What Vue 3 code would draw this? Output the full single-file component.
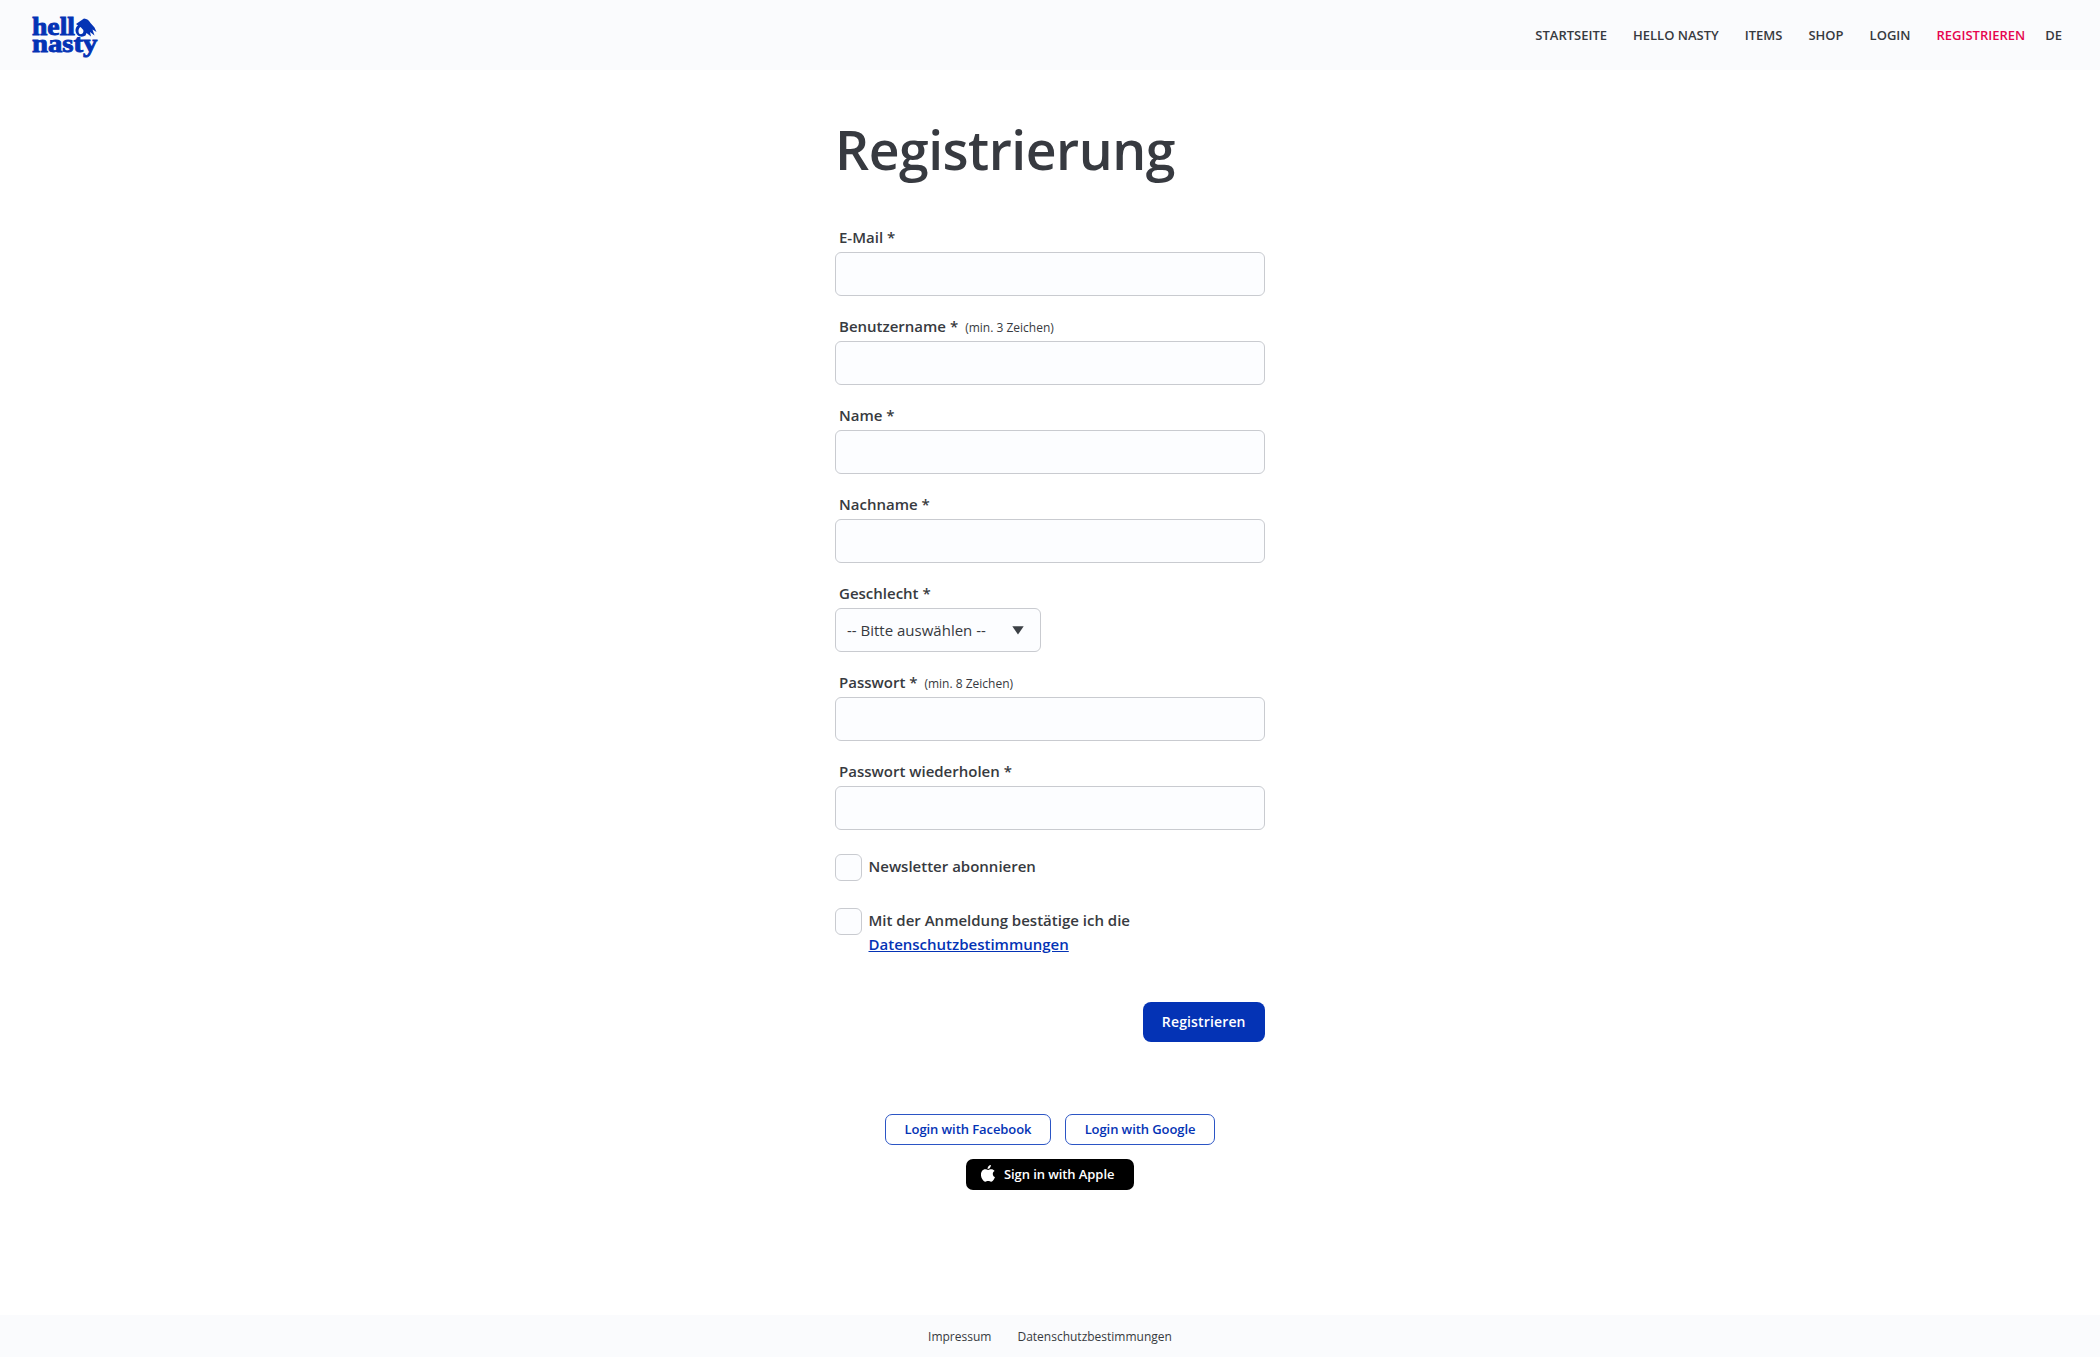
<script setup>
const nav = ['STARTSEITE', 'HELLO NASTY', 'ITEMS', 'SHOP', 'LOGIN', 'REGISTRIEREN', 'DE']
const fields = [
  { id: 'email', label: 'E-Mail *', type: 'email' },
  { id: 'username', label: 'Benutzername *', hint: '(min. 3 Zeichen)', type: 'text' },
  { id: 'firstname', label: 'Name *', type: 'text' },
  { id: 'lastname', label: 'Nachname *', type: 'text' },
  { id: 'gender', label: 'Geschlecht *', type: 'select' },
  { id: 'password', label: 'Passwort *', hint: '(min. 8 Zeichen)', type: 'password' },
  { id: 'repeat', label: 'Passwort wiederholen *', type: 'password' },
]
</script>

<template>
  <div class="page">
    <header class="header">
      <svg class="logo" width="68" height="44" viewBox="0 0 68 44" role="img" aria-label="hello nasty">
        <g class="logo-text">
          <text x="0" y="18.4" font-size="25.5" textLength="43" lengthAdjust="spacingAndGlyphs">hell</text>
          <text x="0" y="34.6" font-size="25.5" textLength="65.5" lengthAdjust="spacingAndGlyphs">nasty</text>
        </g>
        <path
          fill="currentColor"
          fill-rule="evenodd"
          d="M44 7 L52 1.500 C55 1.600 57 3.500 58.500 6 L62.500 10.500 L64.500 15 L60.500 12.600 L62.500 18.500 L58 15 L59 19.500 L54.500 16 L53.500 18.600 C51 20.300 47 20 45 17.500 C42.800 14.500 43 10.500 46 8.500 Z M48.600 10 C46 11 46 16 47.800 17 C50.300 17.800 52 15.500 51.300 13 Z"
        />
      </svg>
      <nav class="nav">
        <a v-for="item in nav" :key="item" :class="{ active: item === 'REGISTRIEREN', lang: item === 'DE' }">{{ item }}</a>
      </nav>
    </header>

    <main class="main">
      <h1>Registrierung</h1>
      <form class="form">
        <div v-for="f in fields" :key="f.id" class="field">
          <label :for="f.id">{{ f.label }}<small v-if="f.hint">{{ f.hint }}</small></label>
          <div v-if="f.type === 'select'" :id="f.id" class="control select">
            <span>-- Bitte auswählen --</span>
            <svg width="12" height="9" viewBox="0 0 12 9"><path d="M.3 .3h11.4L6 8.6z" fill="#3c4046" /></svg>
          </div>
          <input v-else :id="f.id" class="control" :type="f.type" />
        </div>

        <div class="check">
          <span class="box"></span>
          <span class="check-text">Newsletter abonnieren</span>
        </div>
        <div class="check">
          <span class="box"></span>
          <span class="check-text">Mit der Anmeldung bestätige ich die<br /><a>Datenschutzbestimmungen</a></span>
        </div>
        <button type="button" class="submit">Registrieren</button>
      </form>

      <div class="social">
        <button type="button" class="outline facebook">Login with Facebook</button>
        <button type="button" class="outline google">Login with Google</button>
        <button type="button" class="apple">
          <svg width="14" height="17" viewBox="0 0 14 17">
            <path
              fill="#fff"
              d="M9.9 0c.1 1.1-.3 2-.9 2.700-.6.8-1.500 1.300-2.400 1.200-.1-1 .3-2 .9-2.700C8.100.500 9.100.100 9.900 0zM13.600 5.900c-1.200.7-1.800 1.700-1.800 3 0 1.500.9 2.700 2.200 3.200-.3.900-.7 1.700-1.200 2.500-.7 1.100-1.500 2.200-2.700 2.200-1.200 0-1.500-.7-2.900-.7s-1.800.7-2.900.7c-1.200 0-2.100-1.200-2.800-2.200C-.4 11.900-.6 8 1 6c.8-1.100 2-1.700 3.200-1.700 1.200 0 2 .7 3 .7s1.600-.7 3.100-.7c1.200 0 2.500.6 3.300 1.600z"
            />
          </svg>
          <span>Sign in with Apple</span>
        </button>
      </div>
    </main>

    <footer class="footer">
      <a>Impressum</a>
      <a>Datenschutzbestimmungen</a>
    </footer>
  </div>
</template>

<style>
body {
  margin: 0;
  background: #fff;
}
</style>

<style scoped>
* {
  box-sizing: border-box;
}
.page {
  display: flex;
  flex-direction: column;
  height: 1357px;
  font-family: 'Open Sans', 'Noto Sans', sans-serif;
  color: #373a40;
}
.header {
  display: flex;
  flex: none;
  justify-content: space-between;
  height: 70px;
  padding: 0 38px 0 32px;
  background: #fafbfd;
}
.logo {
  overflow: visible;
  margin-top: 17px;
  color: #0433b5;
}
.logo-text {
  font-family: 'Liberation Serif', serif;
  font-weight: 700;
  fill: currentColor;
  stroke: currentColor;
  stroke-width: 0.9px;
}
.nav {
  display: flex;
  gap: 26px;
  font-size: 13px;
  font-weight: 600;
  line-height: 70px;
}
.nav .active {
  color: #e6064f;
}
.nav .lang {
  margin-left: -6px;
}
.main {
  flex: 1;
  width: 430px;
  margin: 0 auto;
}
h1 {
  height: 152px;
  margin: 0;
  padding-top: 43px;
  font-size: 53.5px;
  font-weight: 600;
  line-height: 73px;
  letter-spacing: -0.5px;
  white-space: nowrap;
}
.field {
  display: flex;
  flex-direction: column;
  height: 89px;
}
.field label {
  height: 30px;
  padding-left: 4px;
  font-size: 15px;
  font-weight: 600;
  line-height: 30px;
}
.field small {
  margin-left: 7px;
  font-size: 12px;
  font-weight: 400;
}
.control {
  width: 430px;
  height: 44px;
  border: 1px solid #c9cbd0;
  border-radius: 6px;
  background: #fcfdff;
}
.select {
  display: flex;
  align-items: center;
  justify-content: space-between;
  width: 206px;
  padding: 0 16px 0 11px;
  font-size: 15px;
}
.check {
  display: flex;
  gap: 7px;
  height: 54px;
}
.form .field:nth-child(7) {
  height: 98px;
}
.box {
  width: 26.5px;
  height: 26.5px;
  border: 1px solid #c9cbd0;
  border-radius: 6px;
  background: #fcfdff;
}
.check-text {
  font-size: 15px;
  font-weight: 600;
  line-height: 24px;
}
.check-text a {
  color: #0433b5;
  text-decoration: underline;
}
.submit {
  display: block;
  width: 122.5px;
  height: 40px;
  margin: 40px 0 0 auto;
  padding: 0 0 1px;
  border: 0;
  border-radius: 8px;
  background: #0433b5;
  color: #fff;
  font: 600 14px 'Open Sans', sans-serif;
  letter-spacing: 0.15px;
}
.social {
  display: flex;
  flex-wrap: wrap;
  justify-content: center;
  gap: 14px;
  margin-top: 72px;
}
.social button {
  height: 31px;
  padding: 0 0 2px;
  border-radius: 7px;
  font: 600 13px 'Open Sans', sans-serif;
  letter-spacing: -0.08px;
}
.outline {
  border: 1px solid #2b55c5;
  background: #fff;
  color: #0433b5;
}
.facebook {
  width: 166px;
}
.google {
  width: 150px;
}
.social .apple {
  display: flex;
  align-items: center;
  gap: 9px;
  width: 168px;
  padding-left: 15px;
  border: 0;
  background: #000;
  color: #fff;
}
.footer {
  display: flex;
  flex: none;
  justify-content: center;
  gap: 26px;
  height: 42px;
  background: #fafbfd;
  font-size: 12px;
  line-height: 44px;
}
</style>
